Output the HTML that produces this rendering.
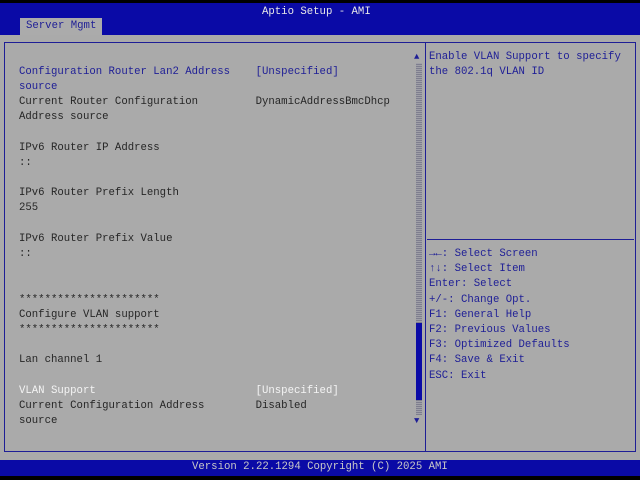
<!DOCTYPE html>
<html><head><style>
body{margin:0;width:640px;height:480px;background:#000;position:relative;overflow:hidden;font-family:"Liberation Mono",monospace;font-size:10.67px;}
.a{position:absolute;white-space:pre;line-height:15.2px;}
.b{color:#1e1e96}.d{color:#262626}.w{color:#f4f4f4}
.ar{display:inline-block;width:6.4px;height:15.2px;line-height:15.2px;vertical-align:top;overflow:visible;font-weight:bold}
</style></head><body>
<div style="position:absolute;left:0;top:3px;width:640px;height:32px;background:#0a0aa6"></div>
<div class="a" style="left:262px;top:5px;color:#e8e8e8">Aptio Setup - AMI</div>
<div style="position:absolute;left:20px;top:18px;width:82px;height:17px;background:#ababab"></div>
<div class="a b" style="left:26px;top:19px">Server Mgmt</div>
<div style="position:absolute;left:0;top:35px;width:640px;height:425px;background:#aaaaaa"></div>
<div style="position:absolute;left:4px;top:42px;width:630px;height:408px;border:1px solid #1e1e96"></div>
<div style="position:absolute;left:425px;top:42px;width:1px;height:410px;background:#1e1e96"></div>
<div style="position:absolute;left:427px;top:239px;width:207px;height:1px;background:#1e1e96"></div>
<div style="position:absolute;left:416px;top:63px;width:6px;height:352px;background:repeating-linear-gradient(0deg,#7e7e8e 0 1px,#a0a0a8 1px 2px)"></div>
<div style="position:absolute;left:416px;top:323px;width:6px;height:77px;background:#0a0aa6"></div>
<div class="a b" style="left:414px;top:50px;font-size:9px">▲</div>
<div class="a b" style="left:414px;top:414px;font-size:9px">▼</div>
<div class="a b" style="left:19px;top:65px">Configuration Router Lan2 Address    [Unspecified]
source</div>
<div class="a d" style="left:19px;top:95px">Current Router Configuration         DynamicAddressBmcDhcp
Address source

IPv6 Router IP Address
::

IPv6 Router Prefix Length
255

IPv6 Router Prefix Value
::


**********************
Configure VLAN support
**********************

Lan channel 1
</div>
<div class="a w" style="left:19px;top:384px">VLAN Support                         [Unspecified]</div>
<div class="a d" style="left:19px;top:399px">Current Configuration Address        Disabled
source</div>
<div class="a b" style="left:429px;top:50px">Enable VLAN Support to specify
the 802.1q VLAN ID</div>
<div class="a b" style="left:429px;top:247px"><span class="ar">→</span><span class="ar">←</span>: Select Screen
<span class="ar">↑</span><span class="ar">↓</span>: Select Item
Enter: Select
+/-: Change Opt.
F1: General Help
F2: Previous Values
F3: Optimized Defaults
F4: Save &amp; Exit
ESC: Exit</div>
<div style="position:absolute;left:0;top:460px;width:640px;height:16px;background:#0a0aa6"></div>
<div class="a" style="left:192px;top:460px;color:#c8c8c8">Version 2.22.1294 Copyright (C) 2025 AMI</div>
</body></html>
